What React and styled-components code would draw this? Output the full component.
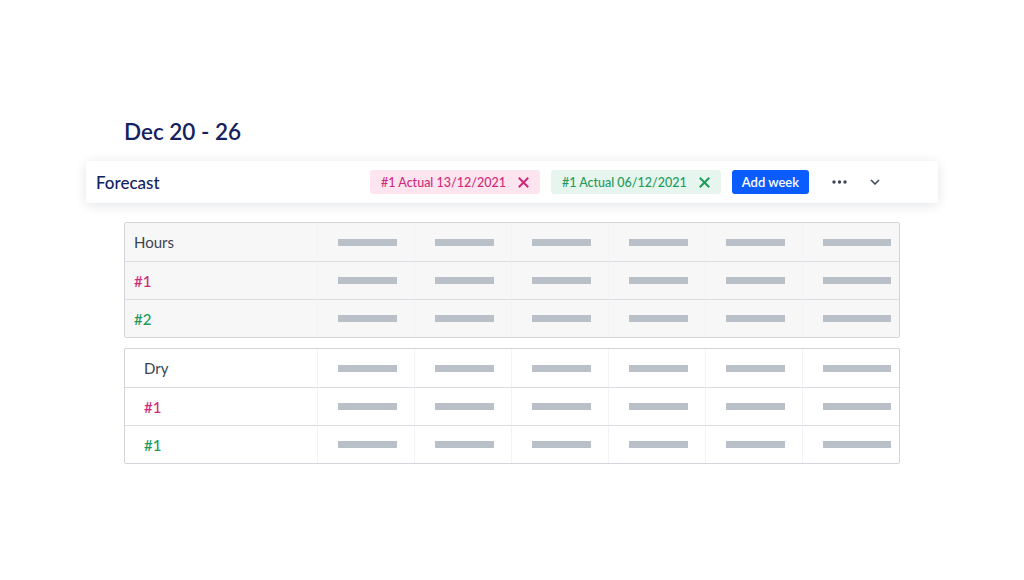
import React from "react"
import styled, { createGlobalStyle } from "styled-components"

const GlobalStyle = createGlobalStyle`
  body {
    margin: 0;
    background: #fff;
    font-family: "Lato", "Liberation Sans", sans-serif;
  }
`

const Page = styled.div`
  width: 776px;
  margin: 0 auto;
  padding-top: 117px;
`

const Title = styled.h1`
  margin: 0 0 14px;
  font-size: 22.5px;
  line-height: 30px;
  font-weight: 600;
  color: #14225e;
`

const Toolbar = styled.div`
  margin: 0 -38px 19px;
  height: 42px;
  display: flex;
  align-items: center;
  padding: 0 58px 0 10px;
  background: #fff;
  border-radius: 3px;
  box-shadow: 0 2px 12px rgba(20, 30, 60, 0.12);
`

const ToolbarTitle = styled.div`
  font-size: 17px;
  font-weight: 500;
  color: #14225e;
  margin-right: auto;
`

const Chip = styled.div`
  height: 24px;
  display: flex;
  align-items: center;
  gap: 12px;
  padding: 0 11px;
  margin-right: 11px;
  border-radius: 3px;
  font-size: 12.5px;
  font-weight: 500;
  color: ${p => (p.tone === "green" ? "#1d9a5c" : "#cf2a7b")};
  background: ${p => (p.tone === "green" ? "#e6f6ee" : "#fde5ef")};
`

const Button = styled.button`
  height: 24px;
  padding: 0 10px;
  border: none;
  border-radius: 3px;
  background: #0b5cff;
  color: #fff;
  font-family: inherit;
  font-size: 13px;
  font-weight: 600;
`

const IconButton = styled.span`
  display: flex;
  align-items: center;
  justify-content: center;
  margin-left: ${p => p.gap}px;
  color: #3d4454;
`

const Table = styled.div`
  display: grid;
  grid-template-columns: 192px repeat(6, 1fr);
  border: 1px solid #d2d5da;
  border-radius: 2px;
  background: ${p => (p.shaded ? "#f7f7f8" : "#fff")};
  margin-bottom: 10px;
`

const Label = styled.div`
  box-sizing: border-box;
  height: 38px;
  display: flex;
  align-items: center;
  padding-left: ${p => (p.indent ? 19 : 9)}px;
  font-size: 15px;
  font-weight: ${p => (p.tone ? 500 : 400)};
  color: ${p =>
    p.tone === "pink" ? "#d0297b" : p.tone === "green" ? "#1d9a5c" : "#3b4351"};
  border-top: ${p => (p.first ? "none" : "1px solid #d9dce0")};
`

const Cell = styled.div`
  box-sizing: border-box;
  height: 38px;
  display: flex;
  align-items: center;
  padding-left: 20px;
  border-left: 1px solid #f2f3f4;
  border-top: ${p => (p.first ? "none" : "1px solid #d9dce0")};
`

const Bar = styled.div`
  width: ${p => (p.wide ? 68 : 59)}px;
  height: 7px;
  background: #b9c0c8;
`

const Close = ({ color }) => (
  <svg width="11" height="11" viewBox="0 0 11 11">
    <path d="M1.5 1.5l8 8M9.5 1.5l-8 8" stroke={color} strokeWidth="2" strokeLinecap="square" />
  </svg>
)

const Dots = () => (
  <svg width="15" height="4" viewBox="0 0 15 4">
    <circle cx="2" cy="2" r="1.7" fill="#3d4454" />
    <circle cx="7.5" cy="2" r="1.7" fill="#3d4454" />
    <circle cx="13" cy="2" r="1.7" fill="#3d4454" />
  </svg>
)

const Chevron = () => (
  <svg width="10" height="6" viewBox="0 0 10 6">
    <path d="M1 1l4 4 4-4" stroke="#3d4454" strokeWidth="1.5" fill="none" />
  </svg>
)

const rowsA = [
  { label: "Hours" },
  { label: "#1", tone: "pink" },
  { label: "#2", tone: "green" },
]

const rowsB = [
  { label: "Dry" },
  { label: "#1", tone: "pink" },
  { label: "#1", tone: "green" },
]

const DataTable = ({ rows, shaded, indent }) => (
  <Table shaded={shaded}>
    {rows.map((row, i) => (
      <React.Fragment key={i}>
        <Label first={i === 0} tone={row.tone} indent={indent}>
          {row.label}
        </Label>
        {[0, 1, 2, 3, 4, 5].map(c => (
          <Cell key={c} first={i === 0}>
            <Bar wide={c === 5} />
          </Cell>
        ))}
      </React.Fragment>
    ))}
  </Table>
)

export default function App() {
  return (
    <>
      <GlobalStyle />
      <Page>
        <Title>Dec 20 - 26</Title>
        <Toolbar>
          <ToolbarTitle>Forecast</ToolbarTitle>
          <Chip tone="pink">
            #1 Actual 13/12/2021
            <Close color="#d0297b" />
          </Chip>
          <Chip tone="green">
            #1 Actual 06/12/2021
            <Close color="#1d9a5c" />
          </Chip>
          <Button>Add week</Button>
          <IconButton gap={23}>
            <Dots />
          </IconButton>
          <IconButton gap={23}>
            <Chevron />
          </IconButton>
        </Toolbar>
        <DataTable rows={rowsA} shaded />
        <DataTable rows={rowsB} indent />
      </Page>
    </>
  )
}
